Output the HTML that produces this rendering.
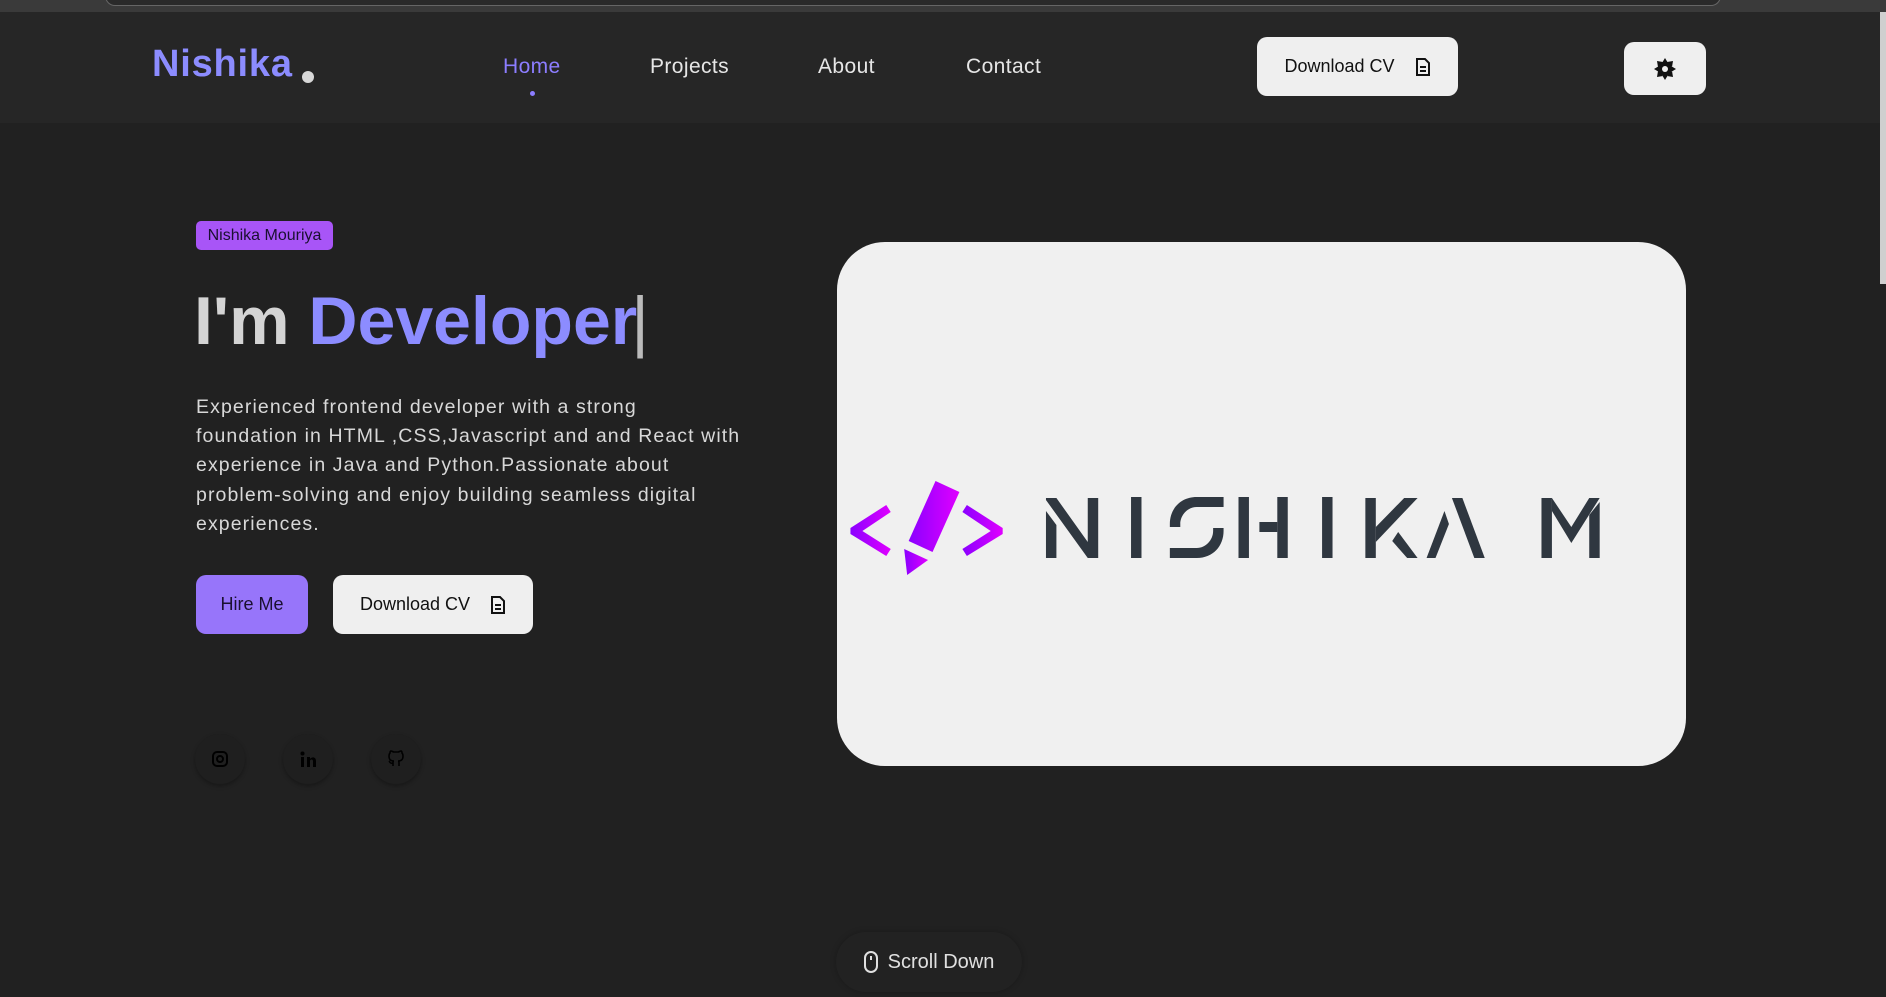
<!DOCTYPE html>
<html><head><meta charset="utf-8"><style>
*{margin:0;padding:0;box-sizing:border-box}
body{width:1886px;height:997px;overflow:hidden;background:#212121;font-family:"Liberation Sans",sans-serif;position:relative}
.a{position:absolute}
.topbar{left:0;top:0;width:1886px;height:14px;background:#3a3a3a}
.topbar div{position:absolute;left:105px;top:-6px;width:1616px;height:12px;border:1px solid #666;border-top:none;border-radius:0 0 10px 10px;background:#2a2a2a}
.header{left:0;top:12px;width:1886px;height:111px;background:#262626}
.nav{font-size:21px;color:#e6e6e6;top:55px;letter-spacing:0.4px}
.btnw{background:#efefef;border-radius:10px;color:#111;display:flex;align-items:center;justify-content:center}
.p div{white-space:nowrap}
</style></head><body>
<div class="a topbar"><div></div></div>
<div class="a header"></div>
<div class="a" style="left:1880px;top:12px;width:6px;height:272px;background:#cfcfcf"></div>
<div class="a" style="left:152px;top:43px;font-size:38px;font-weight:bold;color:#8c8cff;letter-spacing:0.8px">Nishika</div>
<div class="a" style="left:302px;top:71px;width:12px;height:12px;border-radius:50%;background:#d8d8d8"></div>
<div class="a nav" style="left:503px;color:#8c7dff">Home</div>
<div class="a" style="left:530px;top:91px;width:5px;height:5px;border-radius:50%;background:#8c7dff"></div>
<div class="a nav" style="left:650px">Projects</div>
<div class="a nav" style="left:818px">About</div>
<div class="a nav" style="left:966px">Contact</div>
<div class="a btnw" style="left:1257px;top:37px;width:201px;height:59px;font-size:18px">Download CV
<svg width="16" height="18" viewBox="0 0 16 18" style="margin-left:20px"><path d="M2 1h8l4 4v12H2z" fill="none" stroke="#111" stroke-width="2"/><path d="M5 9h6M5 13h6" stroke="#111" stroke-width="2"/></svg></div>
<div class="a btnw" style="left:1624px;top:42px;width:82px;height:53px">
<svg width="22" height="22" viewBox="0 0 22 22"><g fill="#111"><circle cx="11" cy="11" r="7"/><path d="M11 0l3 5h-6zM11 22l3-5h-6zM0 11l5-3v6zM22 11l-5-3v6zM3 3l6 1-5 5zM19 19l-6-1 5-5zM19 3l-1 6-5-5zM3 19l1-6 5 5z"/></g><circle cx="11" cy="11" r="3" fill="#efefef"/></svg></div>

<div class="a" style="left:196px;top:221px;width:137px;height:29px;background:#a855f7;border-radius:5px;font-size:16px;color:#1a1030;line-height:29px;text-align:center">Nishika Mouriya</div>
<div class="a" style="left:194px;top:282px;font-size:68px;font-weight:bold;color:#d4d4d4;white-space:nowrap">I'm <span style="color:#8c8cff">Developer</span><span style="color:#bbb;font-weight:normal;margin-left:-6px">|</span></div>
<div class="a p" style="left:196px;top:393px;font-size:19.5px;line-height:29.2px;color:#d8d8d8;letter-spacing:1.1px">
<div>Experienced frontend developer with a strong</div>
<div>foundation in HTML ,CSS,Javascript and and React with</div>
<div>experience in Java and Python.Passionate about</div>
<div>problem-solving and enjoy building seamless digital</div>
<div>experiences.</div></div>
<div class="a" style="left:196px;top:575px;width:112px;height:59px;background:#9775fa;border-radius:10px;font-size:18px;color:#1a1030;display:flex;align-items:center;justify-content:center">Hire Me</div>
<div class="a btnw" style="left:333px;top:575px;width:200px;height:59px;font-size:18px">Download CV
<svg width="16" height="18" viewBox="0 0 16 18" style="margin-left:20px"><path d="M2 1h8l4 4v12H2z" fill="none" stroke="#111" stroke-width="2"/><path d="M5 9h6M5 13h6" stroke="#111" stroke-width="2"/></svg></div>
<div class="a" style="left:195px;top:734px;width:50px;height:50px;border-radius:50%;background:#1f1f1f;box-shadow:0 2px 4px rgba(0,0,0,.3)"><svg class="a" style="left:17px;top:17px" width="16" height="16"><rect x="1" y="1" width="14" height="14" rx="4" fill="none" stroke="#000" stroke-width="2"/><circle cx="8" cy="8" r="3" fill="none" stroke="#000" stroke-width="2"/></svg></div>
<div class="a" style="left:283px;top:734px;width:50px;height:50px;border-radius:50%;background:#1f1f1f;box-shadow:0 2px 4px rgba(0,0,0,.3)"><svg class="a" style="left:17px;top:17px" width="17" height="17"><rect x="1" y="6" width="3" height="10" fill="#000"/><circle cx="2.5" cy="2.5" r="2" fill="#000"/><path d="M7 16V6h3v2c1-2 6-3 6 2v6h-3v-6c0-2-3-2-3 0v6z" fill="#000"/></svg></div>
<div class="a" style="left:371px;top:734px;width:50px;height:50px;border-radius:50%;background:#1f1f1f;box-shadow:0 2px 4px rgba(0,0,0,.3)"><svg class="a" style="left:16px;top:16px" width="18" height="18" viewBox="0 0 18 18"><path d="M6 16v-3c-3 1-3-1-4-2M12 16v-3c0-1 0-2-1-2 3 0 5-1 5-5 0-1 0-2-1-3 0-1 0-2-1-2-1 0-2 1-3 1H7C6 2 5 1 4 1c-1 0-1 1-1 2-1 1-1 2-1 3 0 4 2 5 5 5-1 0-1 1-1 2" fill="none" stroke="#000" stroke-width="1.6"/></svg></div>

<div class="a" style="left:837px;top:242px;width:849px;height:524px;background:#f0f0f0;border-radius:48px"></div>
<svg class="a" style="left:0;top:0" width="1886" height="997">
<defs><linearGradient id="g" x1="0" x2="1"><stop offset="0" stop-color="#8a00ff"/><stop offset="1" stop-color="#e000ff"/></linearGradient></defs>
<g transform="translate(840 0) scale(1.4925 1) translate(-840 0)">
<g fill="url(#g)">
<path d="M871 505l3 7-19 19 19 18-3 7-24-22v-6z"/>
<path d="M925 505l-3 7 19 19-19 18 3 7 24-22v-6z"/>
<path d="M904 481l16 11-18 60-16-11z"/>
<path d="M883 549l16 11-14 15z"/>
</g>
<g fill="#2f3740">
<path d="M978 498h7l21 44v-44h7v60h-7l-28-58z"/><path d="M978 511l7 14v33h-7z"/>
<rect x="1035" y="497" width="7" height="61"/>
<path d="M1097 497v10h-18c-6 0-11 8-11 17v3h-7v-3c0-15 7-27 18-27zM1061 558v-10h18c6 0 11-8 11-17v-3h7v3c0 15-7 27-18 27z"/>
<rect x="1107" y="497" width="7" height="61"/><rect x="1133" y="497" width="7" height="61"/><rect x="1121" y="522" width="12" height="10"/>
<rect x="1163" y="497" width="7" height="61"/>
<rect x="1192" y="498" width="7" height="60"/><path d="M1199 527l19-29h9l-28 44z"/><path d="M1210 541l4-9 13 26h-7z"/>
<path d="M1233 558l12-47 3 13-9 34z"/><path d="M1250 498h7l15 60h-7z"/>
<rect x="1310" y="498" width="7" height="60"/><path d="M1317 498l13 29 12-29h7l-19 45-13-32z"/><path d="M1342 515l7-13v56h-7z"/>
</g></g></svg>

<div class="a" style="left:836px;top:932px;width:186px;height:60px;border-radius:30px;background:#222;box-shadow:0 0 6px rgba(0,0,0,.25);display:flex;align-items:center;justify-content:center;font-size:20px;color:#e0e0e0">
<svg width="14" height="22" style="margin-right:10px"><rect x="1" y="1" width="12" height="20" rx="6" fill="none" stroke="#e0e0e0" stroke-width="2"/><path d="M7 5v4" stroke="#e0e0e0" stroke-width="2"/></svg>Scroll Down</div>
</body></html>
